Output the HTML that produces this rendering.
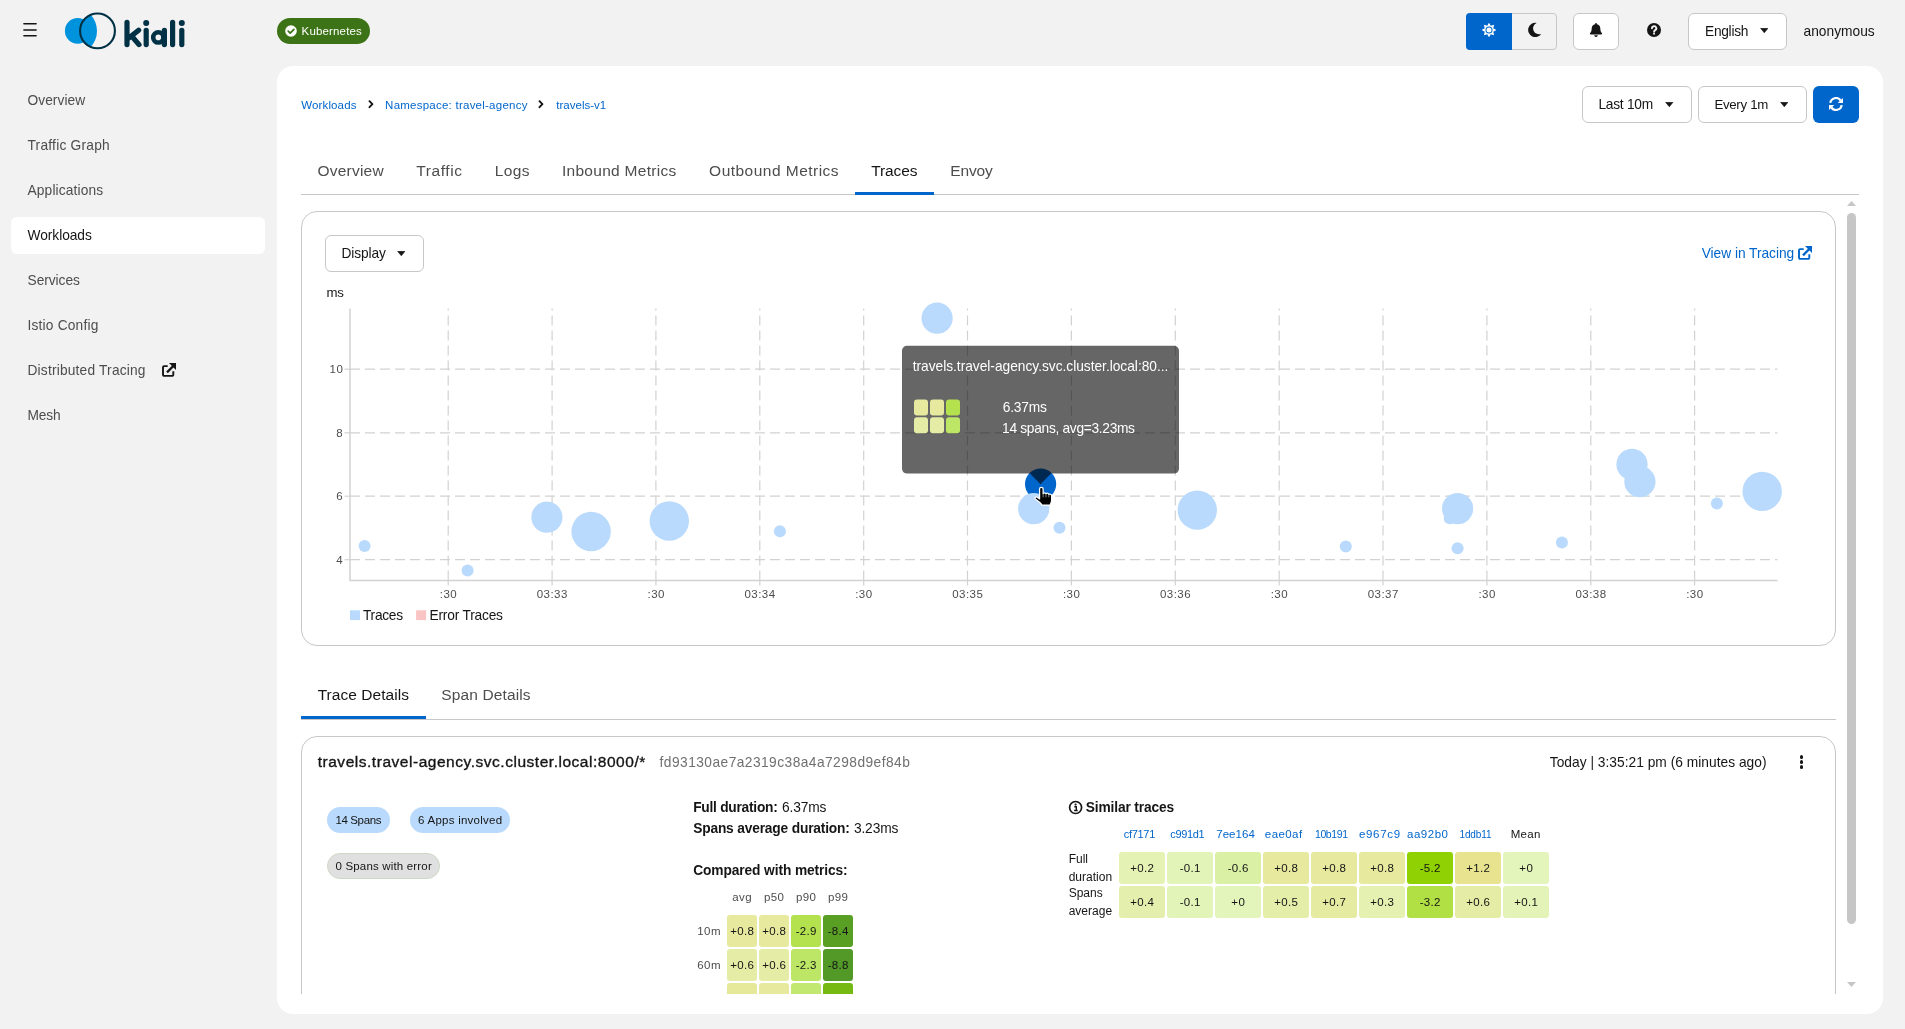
<!DOCTYPE html>
<html><head><meta charset="utf-8"><title>Kiali</title><style>html,body{margin:0;padding:0}body{width:1905px;height:1029px;overflow:hidden;background:#f2f2f2;font-family:"Liberation Sans",sans-serif;position:relative}
.t{position:absolute;white-space:nowrap;display:block;line-height:20px;transform:translateZ(0)}
.b{position:absolute;display:block}
</style></head><body>
<svg class="b" style="left:22px;top:21px" width="16" height="18" viewBox="0 0 16 18"><path d="M1.900 2.800h12.200M1.900 9h12.200M1.900 14.700h12.200" stroke="#151515" stroke-width="1.500" stroke-linecap="round"/></svg>
<svg class="b" style="left:60px;top:8px" width="130" height="46" viewBox="60 8 130 46">
<defs><clipPath id="ring"><circle cx="97.5" cy="30.9" r="17.4"/></clipPath></defs>
<circle cx="77.7" cy="30.9" r="12.8" fill="#0093dd"/>
<circle cx="73" cy="30.9" r="24" fill="#0093dd" clip-path="url(#ring)"/>
<circle cx="97.5" cy="30.9" r="17.4" fill="none" stroke="#003145" stroke-width="2.1"/>
<g fill="none" stroke="#003145" stroke-width="5.2" stroke-linecap="round" stroke-linejoin="round">
<path d="M127 22.3V44.6M138.6 30.2L128.5 38.2M131.8 36.2L139 44.6"/>
<path d="M146.2 30.3V44.6"/>
<path d="M164.4 30.3V44.6"/>
<path d="M172.6 22.3V44.6"/>
<path d="M181.8 30.3V44.6"/>
</g>
<circle cx="158.3" cy="37.4" r="5.1" fill="none" stroke="#003145" stroke-width="4.6"/>
<circle cx="146.2" cy="23" r="3" fill="#003145"/><circle cx="181.8" cy="23" r="3" fill="#003145"/>
</svg>
<div class="b" style="left:277px;top:18px;width:93px;height:26px;background:#3d7317;border-radius:13px;"></div>
<svg class="b" style="left:284px;top:24px" width="14" height="14" viewBox="0 0 14 14"><circle cx="7" cy="7" r="5.8" fill="#fff"/><path d="M4.2 7.2L6.2 9.2L9.9 5.3" fill="none" stroke="#3d7317" stroke-width="1.7" stroke-linecap="round" stroke-linejoin="round"/></svg>
<span class="t" style="left:301.60px;top:21px;font-size:11.5px;color:#fff;letter-spacing:0.154px;">Kubernetes</span>
<div class="b" style="left:1466px;top:13px;width:91px;height:37px;border:1px solid #c7c7c7;border-radius:4px;box-sizing:border-box;"></div>
<div class="b" style="left:1466px;top:13px;width:46px;height:37px;background:#0066cc;border-radius:4px 0 0 4px;"></div>
<svg class="b" style="left:1482px;top:23px" width="14" height="14" viewBox="0 0 14 14"><polygon points="7.00,-0.30 8.76,2.75 12.16,1.84 11.25,5.24 14.30,7.00 11.25,8.76 12.16,12.16 8.76,11.25 7.00,14.30 5.24,11.25 1.84,12.16 2.75,8.76 -0.30,7.00 2.75,5.24 1.84,1.84 5.24,2.75" fill="#fff"/><circle cx="7" cy="7" r="3.5" fill="#0066cc"/><circle cx="7" cy="7" r="2.5" fill="#fff"/></svg>
<svg class="b" style="left:1526px;top:22px" width="16" height="16" viewBox="0 0 16 16"><path d="M10.600 1A7.100 7.100 0 1 0 15.300 11.700A5.600 5.600 0 0 1 10.600 1Z" fill="#151515"/></svg>
<div class="b" style="left:1573px;top:13px;width:46px;height:37px;background:#fff;border:1px solid #c7c7c7;border-radius:6px;box-sizing:border-box;"></div>
<svg class="b" style="left:1589px;top:22px" width="14" height="16" viewBox="0 0 14 16"><path d="M7 0.9a0.9 0.9 0 0 1 .9 .9v.5a4.3 4.3 0 0 1 3.4 4.2c0 3 .9 3.8 1.6 4.6a.9 .9 0 0 1 -.7 1.4H1.800a.9 .9 0 0 1 -.7 -1.4c.7 -.8 1.600 -1.600 1.600 -4.600A4.3 4.300 0 0 1 6.100 2.300v-.5a.9 .9 0 0 1 .9 -.9zM5.200 13.300h3.600a1.800 1.800 0 0 1 -3.600 0z" fill="#151515"/></svg>
<svg class="b" style="left:1646px;top:22px" width="16" height="16" viewBox="0 0 16 16"><circle cx="8" cy="8" r="7" fill="#151515"/><path d="M5.9 6.300a2.200 2.100 0 1 1 3.300 1.800c-.8 .5 -1.100 .8 -1.100 1.600" fill="none" stroke="#f2f2f2" stroke-width="1.900" stroke-linecap="round"/><circle cx="8.050" cy="11.700" r="1" fill="#f2f2f2"/></svg>
<div class="b" style="left:1688px;top:13px;width:99px;height:37px;background:#fff;border:1px solid #c7c7c7;border-radius:6px;box-sizing:border-box;"></div>
<span class="t" style="left:1705.00px;top:22px;font-size:13.75px;color:#151515;letter-spacing:-0.282px;">English</span>
<svg class="b" style="left:1759.8px;top:28.3px" width="8.6" height="5" viewBox="0 0 8.6 5"><path d="M0.6 0.3H8.0L4.3 4.8Z" fill="#151515" stroke="#151515" stroke-width="0.6" stroke-linejoin="round"/></svg>
<span class="t" style="left:1803.50px;top:22px;font-size:13.75px;color:#151515;letter-spacing:0.013px;">anonymous</span>
<div class="b" style="left:11px;top:217px;width:254px;height:37px;background:#fff;border-radius:6px;"></div>
<span class="t" style="left:27.50px;top:91px;font-size:13.75px;color:#4d4d4d;letter-spacing:0.051px;">Overview</span>
<span class="t" style="left:27.50px;top:136px;font-size:13.75px;color:#4d4d4d;letter-spacing:0.228px;">Traffic Graph</span>
<span class="t" style="left:27.50px;top:181px;font-size:13.75px;color:#4d4d4d;letter-spacing:0.142px;">Applications</span>
<span class="t" style="left:27.50px;top:226px;font-size:13.75px;color:#151515;letter-spacing:-0.050px;">Workloads</span>
<span class="t" style="left:27.50px;top:271px;font-size:13.75px;color:#4d4d4d;letter-spacing:-0.046px;">Services</span>
<span class="t" style="left:27.50px;top:316px;font-size:13.75px;color:#4d4d4d;letter-spacing:0.184px;">Istio Config</span>
<span class="t" style="left:27.50px;top:361px;font-size:13.75px;color:#4d4d4d;letter-spacing:0.187px;">Distributed Tracing</span>
<span class="t" style="left:27.50px;top:406px;font-size:13.75px;color:#4d4d4d;letter-spacing:-0.142px;">Mesh</span>
<svg class="b" style="left:161.8px;top:362.8px" width="14.3" height="14.3" viewBox="0 0 14.300 14.300"><path d="M5.700 3.100H2.200A1.200 1.200 0 0 0 1 4.300V11.700A1.200 1.200 0 0 0 2.200 12.900H10.100A1.200 1.200 0 0 0 11.300 11.700V8.300" fill="none" stroke="#151515" stroke-width="1.900"/><path d="M5 9.300L11.800 2.500" stroke="#151515" stroke-width="2.400" fill="none"/><path d="M7 0H14.300V7.300Z" fill="#151515"/></svg>
<div class="b" style="left:277px;top:66px;width:1606px;height:948px;background:#fff;border-radius:16px;"></div>
<span class="t" style="left:301.30px;top:95px;font-size:11.5px;color:#0066cc;letter-spacing:0.124px;">Workloads</span>
<span class="t" style="left:385.10px;top:95px;font-size:11.5px;color:#0066cc;letter-spacing:0.240px;">Namespace: travel-agency</span>
<span class="t" style="left:556.30px;top:95px;font-size:11.5px;color:#0066cc;letter-spacing:0.006px;">travels-v1</span>
<svg class="b" style="left:367.7px;top:99.8px" width="7" height="9" viewBox="0 0 7 9"><path d="M1.500 1.200L4.400 4.200L1.500 7.200" fill="none" stroke="#151515" stroke-width="1.900" stroke-linecap="round" stroke-linejoin="round"/></svg>
<svg class="b" style="left:538.3px;top:99.8px" width="7" height="9" viewBox="0 0 7 9"><path d="M1.500 1.200L4.400 4.200L1.500 7.200" fill="none" stroke="#151515" stroke-width="1.900" stroke-linecap="round" stroke-linejoin="round"/></svg>
<div class="b" style="left:1582px;top:86px;width:110px;height:37px;background:#fff;border:1px solid #c7c7c7;border-radius:6px;box-sizing:border-box;"></div>
<span class="t" style="left:1598.40px;top:95px;font-size:13.75px;color:#151515;letter-spacing:-0.252px;">Last 10m</span>
<svg class="b" style="left:1665px;top:102.3px" width="8.6" height="5" viewBox="0 0 8.6 5"><path d="M0.6 0.3H8.0L4.3 4.8Z" fill="#151515" stroke="#151515" stroke-width="0.6" stroke-linejoin="round"/></svg>
<div class="b" style="left:1698px;top:86px;width:109px;height:37px;background:#fff;border:1px solid #c7c7c7;border-radius:6px;box-sizing:border-box;"></div>
<span class="t" style="left:1714.40px;top:95px;font-size:13.25px;color:#151515;letter-spacing:-0.293px;">Every 1m</span>
<svg class="b" style="left:1779.6px;top:102.3px" width="8.6" height="5" viewBox="0 0 8.6 5"><path d="M0.6 0.3H8.0L4.3 4.8Z" fill="#151515" stroke="#151515" stroke-width="0.6" stroke-linejoin="round"/></svg>
<div class="b" style="left:1813px;top:86px;width:46px;height:37px;background:#0066cc;border-radius:6px;"></div>
<svg class="b" style="left:1829px;top:97px" width="14" height="14" viewBox="0 0 14 14"><g fill="none" stroke="#fff" stroke-width="2.200"><path d="M1.250 5.900A5.800 5.800 0 0 1 11.700 3.500"/><path d="M12.750 8.100A5.800 5.800 0 0 1 2.300 10.500"/></g><path d="M14 1V5.900H8.700Z" fill="#fff"/><path d="M0 13V8.100H5.300Z" fill="#fff"/></svg>
<span class="t" style="left:317.50px;top:161px;font-size:15.5px;color:#4d4d4d;letter-spacing:0.223px;">Overview</span>
<span class="t" style="left:416.20px;top:161px;font-size:15.5px;color:#4d4d4d;letter-spacing:0.616px;">Traffic</span>
<span class="t" style="left:494.80px;top:161px;font-size:15.5px;color:#4d4d4d;letter-spacing:0.330px;">Logs</span>
<span class="t" style="left:561.90px;top:161px;font-size:15.5px;color:#4d4d4d;letter-spacing:0.294px;">Inbound Metrics</span>
<span class="t" style="left:709.10px;top:161px;font-size:15.5px;color:#4d4d4d;letter-spacing:0.478px;">Outbound Metrics</span>
<span class="t" style="left:871.30px;top:161px;font-size:15.5px;color:#151515;letter-spacing:-0.139px;">Traces</span>
<span class="t" style="left:950.20px;top:161px;font-size:15.5px;color:#4d4d4d;letter-spacing:-0.120px;">Envoy</span>
<div class="b" style="left:301px;top:194px;width:1558px;height:1px;background:#c7c7c7;"></div>
<div class="b" style="left:855px;top:192px;width:79px;height:3px;background:#0066cc;"></div>
<div class="b" style="left:301px;top:211px;width:1535px;height:435px;border:1px solid #c7c7c7;border-radius:16px;box-sizing:border-box;"></div>
<div class="b" style="left:325px;top:235px;width:99px;height:37px;background:#fff;border:1px solid #c7c7c7;border-radius:6px;box-sizing:border-box;"></div>
<span class="t" style="left:341.40px;top:244px;font-size:13.75px;color:#151515;letter-spacing:-0.080px;">Display</span>
<svg class="b" style="left:396.8px;top:251px" width="8.6" height="5" viewBox="0 0 8.6 5"><path d="M0.6 0.3H8.0L4.3 4.8Z" fill="#151515" stroke="#151515" stroke-width="0.6" stroke-linejoin="round"/></svg>
<span class="t" style="left:1701.70px;top:244px;font-size:13.75px;color:#0066cc;letter-spacing:-0.035px;">View in Tracing</span>
<svg class="b" style="left:1798px;top:245.8px" width="14.3" height="14.3" viewBox="0 0 14.300 14.300"><path d="M5.700 3.100H2.200A1.200 1.200 0 0 0 1 4.300V11.700A1.200 1.200 0 0 0 2.200 12.900H10.100A1.200 1.200 0 0 0 11.300 11.700V8.300" fill="none" stroke="#0066cc" stroke-width="1.900"/><path d="M5 9.300L11.800 2.500" stroke="#0066cc" stroke-width="2.400" fill="none"/><path d="M7 0H14.300V7.300Z" fill="#0066cc"/></svg>
<span class="t" style="left:326.50px;top:283px;font-size:13.25px;color:#151515;letter-spacing:-0.256px;">ms</span>
<svg class="b" style="left:300px;top:280px" width="1535" height="360" viewBox="300 280 1535 360"><g stroke="#d2d2d2" stroke-width="1.2" fill="none"><path d="M344.5 369.2H350"/><path d="M350 369.2H1777.500" stroke-dasharray="10 5"/><path d="M344.5 432.8H350"/><path d="M350 432.8H1777.500" stroke-dasharray="10 5"/><path d="M344.5 496.2H350"/><path d="M350 496.2H1777.500" stroke-dasharray="10 5"/><path d="M344.5 559.7H350"/><path d="M350 559.7H1777.500" stroke-dasharray="10 5"/><path d="M448.2 585.5V580.4"/><path d="M448.2 580.4V308.500" stroke-dasharray="10 5"/><path d="M552.1 585.5V580.4"/><path d="M552.1 580.4V308.500" stroke-dasharray="10 5"/><path d="M655.9 585.5V580.4"/><path d="M655.9 580.4V308.500" stroke-dasharray="10 5"/><path d="M759.8 585.5V580.4"/><path d="M759.8 580.4V308.500" stroke-dasharray="10 5"/><path d="M863.7 585.5V580.4"/><path d="M863.7 580.4V308.500" stroke-dasharray="10 5"/><path d="M967.5 585.5V580.4"/><path d="M967.5 580.4V308.500" stroke-dasharray="10 5"/><path d="M1071.4 585.5V580.4"/><path d="M1071.4 580.4V308.500" stroke-dasharray="10 5"/><path d="M1175.3 585.5V580.4"/><path d="M1175.3 580.4V308.500" stroke-dasharray="10 5"/><path d="M1279.2 585.5V580.4"/><path d="M1279.2 580.4V308.500" stroke-dasharray="10 5"/><path d="M1383.0 585.5V580.4"/><path d="M1383.0 580.4V308.500" stroke-dasharray="10 5"/><path d="M1486.9 585.5V580.4"/><path d="M1486.9 580.4V308.500" stroke-dasharray="10 5"/><path d="M1590.8 585.5V580.4"/><path d="M1590.8 580.4V308.500" stroke-dasharray="10 5"/><path d="M1694.6 585.5V580.4"/><path d="M1694.6 580.4V308.500" stroke-dasharray="10 5"/></g><path d="M350 308.500V580.4H1777.500" stroke="#d2d2d2" stroke-width="1.500" fill="none"/><circle cx="364.6" cy="546.1" r="6" fill="#b9dafc"/><circle cx="467.6" cy="570.6" r="6" fill="#b9dafc"/><circle cx="546.9" cy="517.2" r="15.6" fill="#b9dafc"/><circle cx="591.1" cy="531.5" r="19.7" fill="#b9dafc"/><circle cx="669.3" cy="521" r="19.7" fill="#b9dafc"/><circle cx="779.9" cy="531.2" r="6" fill="#b9dafc"/><circle cx="937.1" cy="318.2" r="15.6" fill="#b9dafc"/><circle cx="1197.3" cy="510.1" r="19.7" fill="#b9dafc"/><circle cx="1345.8" cy="546.4" r="6" fill="#b9dafc"/><circle cx="1449.7" cy="518.3" r="6" fill="#b9dafc"/><circle cx="1457.6" cy="508.6" r="15.6" fill="#b9dafc"/><circle cx="1457.6" cy="548.2" r="6" fill="#b9dafc"/><circle cx="1561.9" cy="542.4" r="6" fill="#b9dafc"/><circle cx="1632" cy="464.4" r="15.6" fill="#b9dafc"/><circle cx="1639.9" cy="481.7" r="15.6" fill="#b9dafc"/><circle cx="1716.9" cy="503.6" r="6" fill="#b9dafc"/><circle cx="1762.2" cy="491.4" r="19.7" fill="#b9dafc"/><circle cx="1040.6" cy="484.1" r="15.6" fill="#0066cc"/><circle cx="1033.7" cy="508.7" r="15.6" fill="#b9dafc"/><circle cx="1059.5" cy="527.8" r="6" fill="#b9dafc"/><rect x="350" y="610.3" width="10" height="9.8" fill="#b9dafc"/><rect x="416.1" y="610.3" width="10" height="9.8" fill="#fbc4c4"/><path d="M907 345.8H1174A5 5 0 0 1 1179 350.8V468.600A5 5 0 0 1 1174 473.600H1051L1040.500 484.200L1030 473.600H907A5 5 0 0 1 902 468.600V350.8A5 5 0 0 1 907 345.8Z" fill="rgba(0,0,0,0.6)"/><rect x="914" y="399.4" width="14" height="16" rx="3" fill="#e6e99e"/><rect x="930" y="399.4" width="14" height="16" rx="3" fill="#e6e99e"/><rect x="946" y="399.4" width="14" height="16" rx="3" fill="#b4e24f"/><rect x="914" y="417.3" width="14" height="16" rx="3" fill="#e5eca5"/><rect x="930" y="417.3" width="14" height="16" rx="3" fill="#e5eca5"/><rect x="946" y="417.3" width="14" height="16" rx="3" fill="#bee666"/><g transform="translate(1034,486) scale(1.05,1.03)"><path d="M5.300 3A1.700 1.700 0 0 1 8.700 3V7.300C9.300 6.300 11 6.300 11.400 7.500C12.200 6.700 13.800 6.900 14.100 8.100C15.200 7.500 16.800 8.100 16.800 9.600V13.500C16.800 15.500 16 16.800 15.500 18.500H7.500C7 17 5.500 15.800 1.500 12.900C0.300 11.900 1.500 10 3 10.900L5.300 12.500Z" fill="#000" stroke="#fff" stroke-width="1.200" stroke-linejoin="round"/><path d="M8.700 7.300V11M11.400 7.700V11M14.100 8.300V11" stroke="#fff" stroke-width=".5" fill="none"/></g></svg>
<span class="t" style="left:329.56px;top:359px;font-size:11.5px;color:#4d4d4d;letter-spacing:0.547px;">10</span>
<span class="t" style="left:336.23px;top:423px;font-size:11.5px;color:#4d4d4d;">8</span>
<span class="t" style="left:336.23px;top:486px;font-size:11.5px;color:#4d4d4d;">6</span>
<span class="t" style="left:336.23px;top:550px;font-size:11.5px;color:#4d4d4d;">4</span>
<span class="t" style="left:439.80px;top:584px;font-size:11.5px;color:#4d4d4d;letter-spacing:0.408px;">:30</span>
<span class="t" style="left:536.77px;top:584px;font-size:11.5px;color:#4d4d4d;letter-spacing:0.455px;">03:33</span>
<span class="t" style="left:647.54px;top:584px;font-size:11.5px;color:#4d4d4d;letter-spacing:0.408px;">:30</span>
<span class="t" style="left:744.51px;top:584px;font-size:11.5px;color:#4d4d4d;letter-spacing:0.455px;">03:34</span>
<span class="t" style="left:855.28px;top:584px;font-size:11.5px;color:#4d4d4d;letter-spacing:0.408px;">:30</span>
<span class="t" style="left:952.25px;top:584px;font-size:11.5px;color:#4d4d4d;letter-spacing:0.455px;">03:35</span>
<span class="t" style="left:1063.02px;top:584px;font-size:11.5px;color:#4d4d4d;letter-spacing:0.408px;">:30</span>
<span class="t" style="left:1159.99px;top:584px;font-size:11.5px;color:#4d4d4d;letter-spacing:0.455px;">03:36</span>
<span class="t" style="left:1270.76px;top:584px;font-size:11.5px;color:#4d4d4d;letter-spacing:0.408px;">:30</span>
<span class="t" style="left:1367.73px;top:584px;font-size:11.5px;color:#4d4d4d;letter-spacing:0.455px;">03:37</span>
<span class="t" style="left:1478.50px;top:584px;font-size:11.5px;color:#4d4d4d;letter-spacing:0.408px;">:30</span>
<span class="t" style="left:1575.47px;top:584px;font-size:11.5px;color:#4d4d4d;letter-spacing:0.455px;">03:38</span>
<span class="t" style="left:1686.24px;top:584px;font-size:11.5px;color:#4d4d4d;letter-spacing:0.408px;">:30</span>
<span class="t" style="left:363.00px;top:606px;font-size:13.75px;color:#151515;letter-spacing:-0.283px;">Traces</span>
<span class="t" style="left:429.50px;top:606px;font-size:13.75px;color:#151515;letter-spacing:-0.195px;">Error Traces</span>
<span class="t" style="left:912.70px;top:357px;font-size:13.75px;color:#fff;letter-spacing:-0.019px;">travels.travel-agency.svc.cluster.local:80...</span>
<span class="t" style="left:1002.70px;top:398px;font-size:13.75px;color:#fff;letter-spacing:-0.199px;">6.37ms</span>
<span class="t" style="left:1002.10px;top:419px;font-size:13.75px;color:#fff;letter-spacing:-0.307px;">14 spans, avg=3.23ms</span>
<svg class="b" style="left:1846px;top:200px" width="11" height="7" viewBox="0 0 11 7"><path d="M1 6L5.500 0.900L10 6Z" fill="#c6c6c6"/></svg>
<div class="b" style="left:1847px;top:213px;width:9px;height:711px;background:#c6c6c6;border-radius:4.5px;"></div>
<svg class="b" style="left:1846px;top:981px" width="11" height="7" viewBox="0 0 11 7"><path d="M1 1L5.500 6.100L10 1Z" fill="#c6c6c6"/></svg>
<span class="t" style="left:317.70px;top:685px;font-size:15.5px;color:#151515;letter-spacing:0.039px;">Trace Details</span>
<span class="t" style="left:441.20px;top:685px;font-size:15.5px;color:#4d4d4d;letter-spacing:0.137px;">Span Details</span>
<div class="b" style="left:301px;top:719px;width:1535px;height:1px;background:#c7c7c7;"></div>
<div class="b" style="left:301px;top:716px;width:125px;height:3px;background:#0066cc;"></div>
<div class="b" style="left:301px;top:736px;width:1535px;height:258px;overflow:hidden"><div style="width:1535px;height:400px;border:1px solid #c7c7c7;border-radius:16px;box-sizing:border-box"></div></div>
<span class="t" style="left:317.70px;top:752px;font-size:15.5px;color:#151515;letter-spacing:0.528px;-webkit-text-stroke:0.35px #151515;">travels.travel-agency.svc.cluster.local:8000/*</span>
<span class="t" style="left:659.60px;top:753px;font-size:13.75px;color:#707070;letter-spacing:0.449px;">fd93130ae7a2319c38a4a7298d9ef84b</span>
<span class="t" style="left:1549.80px;top:753px;font-size:13.75px;color:#151515;letter-spacing:0.019px;">Today | 3:35:21 pm (6 minutes ago)</span>
<div class="b" style="left:1800.1px;top:755.1999999999999px;width:3.4px;height:3.4px;background:#151515;border-radius:50%;"></div>
<div class="b" style="left:1800.1px;top:760.1999999999999px;width:3.4px;height:3.4px;background:#151515;border-radius:50%;"></div>
<div class="b" style="left:1800.1px;top:765.3px;width:3.4px;height:3.4px;background:#151515;border-radius:50%;"></div>
<div class="b" style="left:327px;top:807px;width:63px;height:26px;background:#b9dafc;border-radius:13px;"></div>
<span class="t" style="left:335.50px;top:810px;font-size:11.5px;color:#151515;letter-spacing:-0.385px;">14 Spans</span>
<div class="b" style="left:410px;top:807px;width:100px;height:26px;background:#b9dafc;border-radius:13px;"></div>
<span class="t" style="left:418.10px;top:810px;font-size:11.5px;color:#151515;letter-spacing:0.246px;">6 Apps involved</span>
<div class="b" style="left:327px;top:853px;width:113px;height:26px;background:#e0e0e0;border:1px solid #cfd8c4;box-sizing:border-box;border-radius:13px;"></div>
<span class="t" style="left:335.50px;top:856px;font-size:11.5px;color:#151515;letter-spacing:0.170px;">0 Spans with error</span>
<span class="t" style="left:693.20px;top:798px;font-size:13.75px;color:#151515;letter-spacing:-0.248px;font-weight:700;">Full duration:</span>
<span class="t" style="left:782.10px;top:798px;font-size:13.75px;color:#151515;letter-spacing:-0.159px;">6.37ms</span>
<span class="t" style="left:693.20px;top:819px;font-size:13.75px;color:#151515;letter-spacing:-0.171px;font-weight:700;">Spans average duration:</span>
<span class="t" style="left:853.90px;top:819px;font-size:13.75px;color:#151515;letter-spacing:-0.119px;">3.23ms</span>
<span class="t" style="left:693.20px;top:861px;font-size:13.75px;color:#151515;letter-spacing:-0.101px;font-weight:700;">Compared with metrics:</span>
<span class="t" style="left:732.33px;top:887px;font-size:11.5px;color:#4d4d4d;letter-spacing:0.398px;">avg</span>
<span class="t" style="left:763.99px;top:887px;font-size:11.5px;color:#4d4d4d;letter-spacing:0.414px;">p50</span>
<span class="t" style="left:795.99px;top:887px;font-size:11.5px;color:#4d4d4d;letter-spacing:0.414px;">p90</span>
<span class="t" style="left:827.99px;top:887px;font-size:11.5px;color:#4d4d4d;letter-spacing:0.414px;">p99</span>
<div class="b" style="left:680px;top:900px;width:200px;height:94px;overflow:hidden"><div class="b" style="left:47px;top:15px;width:30px;height:32px;border-radius:3px;background:#e6e99e"></div><div class="b" style="left:79px;top:15px;width:30px;height:32px;border-radius:3px;background:#e6e99e"></div><div class="b" style="left:111px;top:15px;width:30px;height:32px;border-radius:3px;background:#b4e24f"></div><div class="b" style="left:143px;top:15px;width:30px;height:32px;border-radius:3px;background:#599f24"></div><div class="b" style="left:47px;top:49px;width:30px;height:32px;border-radius:3px;background:#e5eca5"></div><div class="b" style="left:79px;top:49px;width:30px;height:32px;border-radius:3px;background:#e5eca5"></div><div class="b" style="left:111px;top:49px;width:30px;height:32px;border-radius:3px;background:#bee666"></div><div class="b" style="left:143px;top:49px;width:30px;height:32px;border-radius:3px;background:#529928"></div><div class="b" style="left:47px;top:83px;width:30px;height:32px;border-radius:3px;background:#e6e89a"></div><div class="b" style="left:79px;top:83px;width:30px;height:32px;border-radius:3px;background:#e6e99e"></div><div class="b" style="left:111px;top:83px;width:30px;height:32px;border-radius:3px;background:#c3e871"></div><div class="b" style="left:143px;top:83px;width:30px;height:32px;border-radius:3px;background:#75b912"></div></div>
<span class="t" style="left:697.16px;top:921px;font-size:11.5px;color:#4d4d4d;letter-spacing:0.484px;">10m</span>
<span class="t" style="left:730.16px;top:921px;font-size:11.5px;color:#151515;letter-spacing:0.328px;">+0.8</span>
<span class="t" style="left:762.16px;top:921px;font-size:11.5px;color:#151515;letter-spacing:0.328px;">+0.8</span>
<span class="t" style="left:795.66px;top:921px;font-size:11.5px;color:#151515;letter-spacing:0.286px;">-2.9</span>
<span class="t" style="left:827.66px;top:921px;font-size:11.5px;color:#151515;letter-spacing:0.286px;">-8.4</span>
<span class="t" style="left:697.16px;top:955px;font-size:11.5px;color:#4d4d4d;letter-spacing:0.484px;">60m</span>
<span class="t" style="left:730.16px;top:955px;font-size:11.5px;color:#151515;letter-spacing:0.328px;">+0.6</span>
<span class="t" style="left:762.16px;top:955px;font-size:11.5px;color:#151515;letter-spacing:0.328px;">+0.6</span>
<span class="t" style="left:795.66px;top:955px;font-size:11.5px;color:#151515;letter-spacing:0.286px;">-2.3</span>
<span class="t" style="left:827.66px;top:955px;font-size:11.5px;color:#151515;letter-spacing:0.286px;">-8.8</span>
<svg class="b" style="left:1068px;top:799.500px" width="15" height="15" viewBox="0 0 15 15"><circle cx="7.600" cy="7.500" r="6" fill="none" stroke="#151515" stroke-width="1.700"/><circle cx="7.600" cy="4.500" r="1.100" fill="#151515"/><path d="M6.300 6.700H8.300V10.400M6.100 10.500H9.700" stroke="#151515" stroke-width="1.400" fill="none"/></svg>
<span class="t" style="left:1085.70px;top:798px;font-size:13.75px;color:#151515;letter-spacing:-0.131px;font-weight:700;">Similar traces</span>
<span class="t" style="left:1123.75px;top:824px;font-size:11.0px;color:#0066cc;letter-spacing:-0.306px;">cf7171</span>
<div class="b" style="left:1119px;top:852px;width:46px;height:32px;background:#e4f2b4;border-radius:3px;"></div>
<div class="b" style="left:1119px;top:886px;width:46px;height:32px;background:#e5efad;border-radius:3px;"></div>
<span class="t" style="left:1130.16px;top:858px;font-size:11.5px;color:#151515;letter-spacing:0.328px;">+0.2</span>
<span class="t" style="left:1130.16px;top:892px;font-size:11.5px;color:#151515;letter-spacing:0.328px;">+0.4</span>
<span class="t" style="left:1170.30px;top:824px;font-size:11.0px;color:#0066cc;letter-spacing:-0.339px;">c991d1</span>
<div class="b" style="left:1167px;top:852px;width:46px;height:32px;background:#e2f4b8;border-radius:3px;"></div>
<div class="b" style="left:1167px;top:886px;width:46px;height:32px;background:#e2f4b8;border-radius:3px;"></div>
<span class="t" style="left:1179.66px;top:858px;font-size:11.5px;color:#151515;letter-spacing:0.286px;">-0.1</span>
<span class="t" style="left:1179.66px;top:892px;font-size:11.5px;color:#151515;letter-spacing:0.286px;">-0.1</span>
<span class="t" style="left:1216.20px;top:824px;font-size:11.5px;color:#0066cc;letter-spacing:0.045px;">7ee164</span>
<div class="b" style="left:1215px;top:852px;width:46px;height:32px;background:#daf1a5;border-radius:3px;"></div>
<div class="b" style="left:1215px;top:886px;width:46px;height:32px;background:#e4f5bc;border-radius:3px;"></div>
<span class="t" style="left:1227.66px;top:858px;font-size:11.5px;color:#151515;letter-spacing:0.286px;">-0.6</span>
<span class="t" style="left:1231.16px;top:892px;font-size:11.5px;color:#151515;letter-spacing:0.578px;">+0</span>
<span class="t" style="left:1264.85px;top:824px;font-size:11.5px;color:#0066cc;letter-spacing:0.419px;">eae0af</span>
<div class="b" style="left:1263px;top:852px;width:46px;height:32px;background:#e6e99e;border-radius:3px;"></div>
<div class="b" style="left:1263px;top:886px;width:46px;height:32px;background:#e5eea9;border-radius:3px;"></div>
<span class="t" style="left:1274.16px;top:858px;font-size:11.5px;color:#151515;letter-spacing:0.328px;">+0.8</span>
<span class="t" style="left:1274.16px;top:892px;font-size:11.5px;color:#151515;letter-spacing:0.328px;">+0.5</span>
<span class="t" style="left:1314.95px;top:824px;font-size:10.5px;color:#0066cc;letter-spacing:-0.386px;">10b191</span>
<div class="b" style="left:1311px;top:852px;width:46px;height:32px;background:#e6e99e;border-radius:3px;"></div>
<div class="b" style="left:1311px;top:886px;width:46px;height:32px;background:#e6eba2;border-radius:3px;"></div>
<span class="t" style="left:1322.16px;top:858px;font-size:11.5px;color:#151515;letter-spacing:0.328px;">+0.8</span>
<span class="t" style="left:1322.16px;top:892px;font-size:11.5px;color:#151515;letter-spacing:0.328px;">+0.7</span>
<span class="t" style="left:1358.90px;top:824px;font-size:11.5px;color:#0066cc;letter-spacing:0.693px;">e967c9</span>
<div class="b" style="left:1359px;top:852px;width:46px;height:32px;background:#e6e99e;border-radius:3px;"></div>
<div class="b" style="left:1359px;top:886px;width:46px;height:32px;background:#e5f1b1;border-radius:3px;"></div>
<span class="t" style="left:1370.16px;top:858px;font-size:11.5px;color:#151515;letter-spacing:0.328px;">+0.8</span>
<span class="t" style="left:1370.16px;top:892px;font-size:11.5px;color:#151515;letter-spacing:0.328px;">+0.3</span>
<span class="t" style="left:1407.05px;top:824px;font-size:11.5px;color:#0066cc;letter-spacing:0.505px;">aa92b0</span>
<div class="b" style="left:1407px;top:852px;width:46px;height:32px;background:#8fd102;border-radius:3px;"></div>
<div class="b" style="left:1407px;top:886px;width:46px;height:32px;background:#b0e044;border-radius:3px;"></div>
<span class="t" style="left:1419.66px;top:858px;font-size:11.5px;color:#151515;letter-spacing:0.286px;">-5.2</span>
<span class="t" style="left:1419.66px;top:892px;font-size:11.5px;color:#151515;letter-spacing:0.286px;">-3.2</span>
<span class="t" style="left:1459.45px;top:825px;font-size:10.0px;color:#0066cc;letter-spacing:-0.105px;">1ddb11</span>
<div class="b" style="left:1455px;top:852px;width:46px;height:32px;background:#e7e38f;border-radius:3px;"></div>
<div class="b" style="left:1455px;top:886px;width:46px;height:32px;background:#e5eca5;border-radius:3px;"></div>
<span class="t" style="left:1466.16px;top:858px;font-size:11.5px;color:#151515;letter-spacing:0.328px;">+1.2</span>
<span class="t" style="left:1466.16px;top:892px;font-size:11.5px;color:#151515;letter-spacing:0.328px;">+0.6</span>
<span class="t" style="left:1510.70px;top:824px;font-size:11.5px;color:#151515;letter-spacing:0.278px;">Mean</span>
<div class="b" style="left:1503px;top:852px;width:46px;height:32px;background:#e4f5bc;border-radius:3px;"></div>
<div class="b" style="left:1503px;top:886px;width:46px;height:32px;background:#e4f4b8;border-radius:3px;"></div>
<span class="t" style="left:1519.16px;top:858px;font-size:11.5px;color:#151515;letter-spacing:0.578px;">+0</span>
<span class="t" style="left:1514.16px;top:892px;font-size:11.5px;color:#151515;letter-spacing:0.328px;">+0.1</span>
<span class="t" style="left:1068.70px;top:849px;font-size:12px;color:#151515;">Full</span>
<span class="t" style="left:1068.70px;top:867px;font-size:12px;color:#151515;">duration</span>
<span class="t" style="left:1068.70px;top:883px;font-size:12px;color:#151515;">Spans</span>
<span class="t" style="left:1068.70px;top:901px;font-size:12px;color:#151515;">average</span>
</body></html>
